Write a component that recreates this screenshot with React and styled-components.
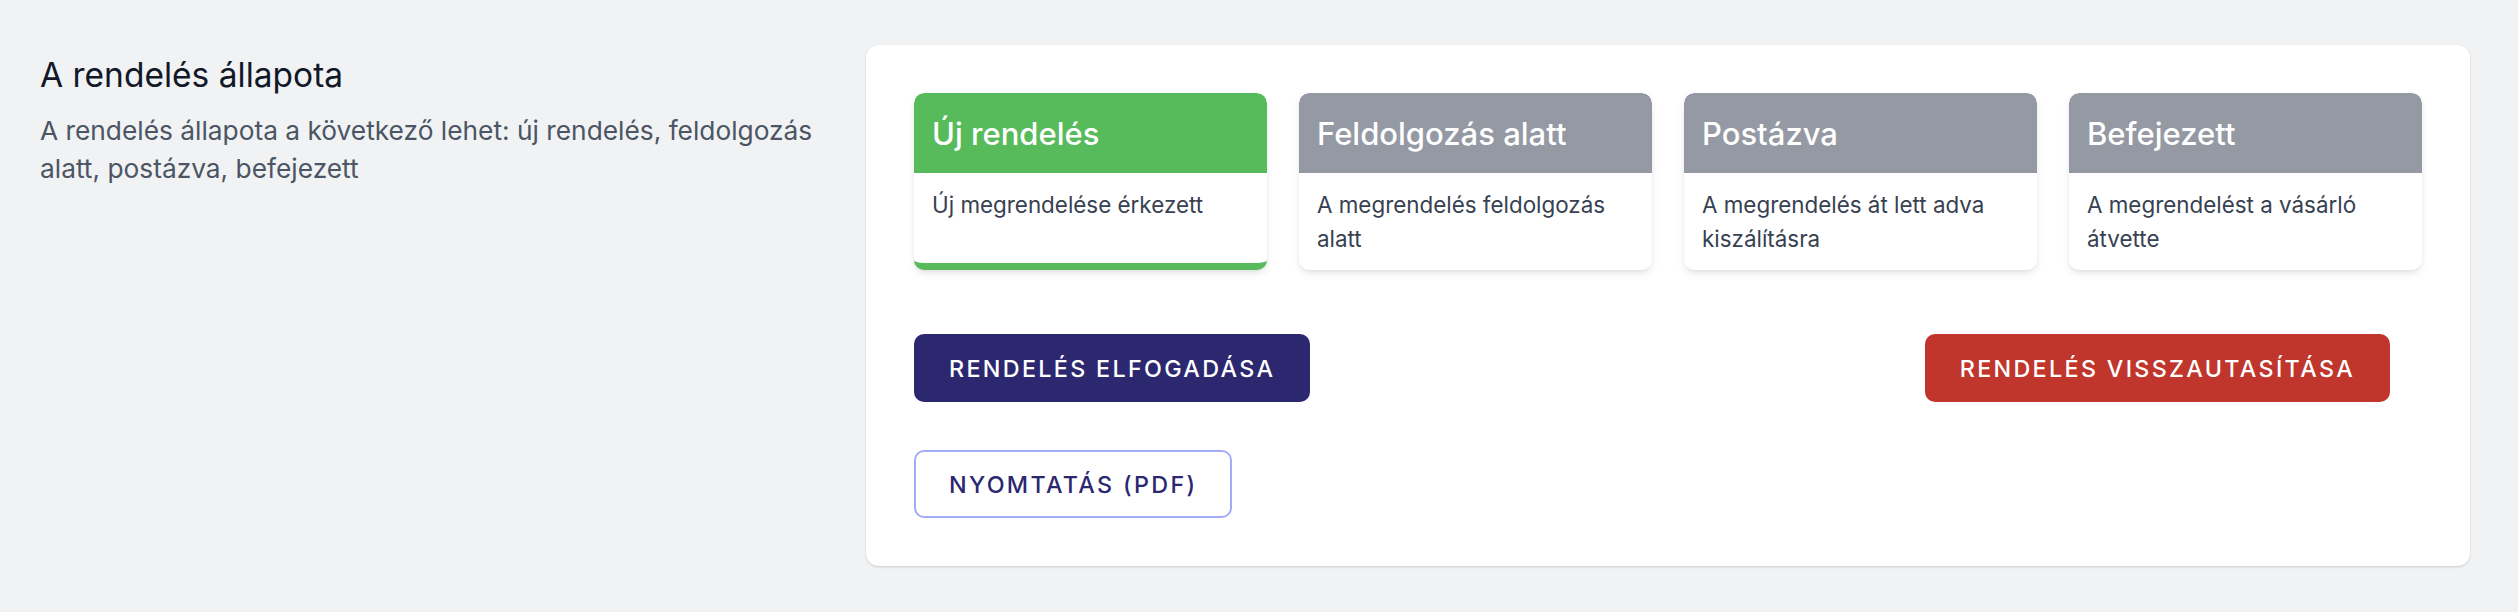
import React from "react";
import styled, { createGlobalStyle } from "styled-components";

const GlobalStyle = createGlobalStyle`
  body {
    margin: 0;
    background-color: #f1f2f4;
    font-family: "Inter", "Noto Sans", sans-serif;
  }
`;

const statuses = [
  { title: "Új rendelés", text: "Új megrendelése érkezett", active: true },
  { title: "Feldolgozás alatt", text: "A megrendelés feldolgozás alatt" },
  { title: "Postázva", text: "A megrendelés át lett adva kiszálításra" },
  { title: "Befejezett", text: "A megrendelést a vásárló átvette" },
];

const App = () => {
  return (
    <>
      <GlobalStyle />
      <Page>
        <Intro>
          <Heading>A rendelés állapota</Heading>
          <Description>
            A rendelés állapota a következő lehet: új rendelés, feldolgozás
            alatt, postázva, befejezett
          </Description>
        </Intro>
        <Card>
          <StatusGrid>
            {statuses.map((s) => (
              <StatusCard key={s.title} $active={s.active}>
                <StatusHeader $active={s.active}>{s.title}</StatusHeader>
                <StatusBody>{s.text}</StatusBody>
              </StatusCard>
            ))}
          </StatusGrid>
          <ActionRow>
            <Button $variant="accept">Rendelés elfogadása</Button>
            <Button $variant="reject">Rendelés visszautasítása</Button>
          </ActionRow>
          <PrintRow>
            <Button $variant="outline">Nyomtatás (PDF)</Button>
          </PrintRow>
        </Card>
      </Page>
    </>
  );
};

const Page = styled.div`
  display: grid;
  grid-template-columns: 778px 1fr;
  column-gap: 48px;
  padding: 45px 48px 47px 40px;
  align-items: start;
`;

const Intro = styled.div`
  padding-top: 8px;
`;

const Heading = styled.h2`
  margin: 0;
  font-size: 33.5px;
  line-height: 44.8px;
  font-weight: 400;
  color: #111827;
`;

const Description = styled.p`
  margin: 14px 0 0;
  font-size: 26.3px;
  line-height: 38.4px;
  color: #4b5563;
`;

const Card = styled.div`
  background-color: #ffffff;
  border-radius: 13px;
  box-shadow: 0 1px 3px rgba(0, 0, 0, 0.1), 0 1px 2px rgba(0, 0, 0, 0.06);
  padding: 48px;
`;

const StatusGrid = styled.div`
  display: grid;
  grid-template-columns: repeat(4, 1fr);
  gap: 32px;
`;

const StatusCard = styled.div`
  display: flex;
  flex-direction: column;
  background-color: #ffffff;
  border-radius: 10px;
  overflow: hidden;
  min-height: 177px;
  box-sizing: border-box;
  box-shadow: 0 4px 8px -1px rgba(0, 0, 0, 0.1), 0 2px 4px -2px rgba(0, 0, 0, 0.08);
  border-bottom: ${(p) => (p.$active ? "7px solid #57ba5b" : "none")};
`;

const StatusHeader = styled.div`
  height: 80px;
  display: flex;
  align-items: center;
  padding: 0 18px;
  background-color: ${(p) => (p.$active ? "#57ba5b" : "#9499a3")};
  color: #ffffff;
  font-size: 31px;
  font-weight: 500;
  border-radius: 10px 10px 0 0;
`;

const StatusBody = styled.div`
  padding: 15px 18px;
  font-size: 22.4px;
  line-height: 33.6px;
  color: #374151;
`;

const ActionRow = styled.div`
  margin-top: 64px;
  padding-right: 32px;
  display: flex;
  justify-content: space-between;
`;

const PrintRow = styled.div`
  margin-top: 48px;
  display: flex;
`;

const variants = {
  accept: { bg: "#2c2870", color: "#ffffff", border: "#2c2870" },
  reject: { bg: "#c0352c", color: "#ffffff", border: "#c0352c" },
  outline: { bg: "#ffffff", color: "#2c2870", border: "#a3abf7" },
};

const Button = styled.button`
  height: 68px;
  padding: 0 33px;
  box-sizing: border-box;
  border-radius: 10px;
  border: 2.5px solid ${(p) => variants[p.$variant].border};
  background-color: ${(p) => variants[p.$variant].bg};
  color: ${(p) => variants[p.$variant].color};
  font-family: "Inter", "Noto Sans", sans-serif;
  font-size: 23.3px;
  font-weight: 500;
  letter-spacing: 0.1em;
  text-transform: uppercase;
  cursor: pointer;
`;

export default App;
